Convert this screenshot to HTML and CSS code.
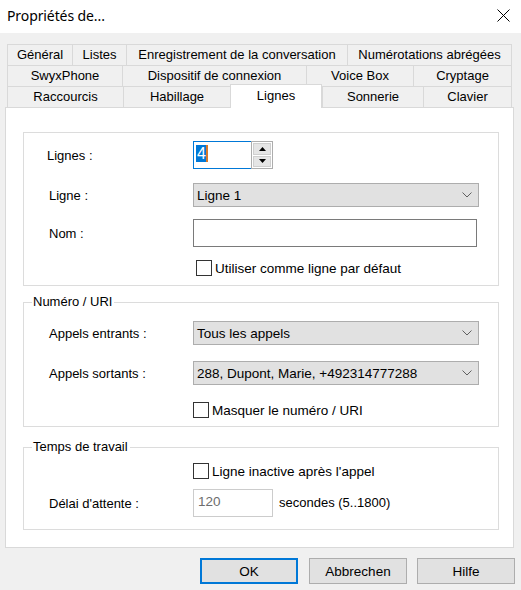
FILE: index.html
```html
<!DOCTYPE html>
<html lang="fr">
<head>
<meta charset="utf-8">
<title>Propriétés de...</title>
<link rel="stylesheet" href="styles.css">
</head>
<body>
<div class="dialog">
  <div class="titlebar">
    <span class="title">Propriétés de...</span>
    <svg class="close" width="13" height="13" viewBox="0 0 13 13"><path d="M0.5 0.5L12.5 12.5M12.5 0.5L0.5 12.5" stroke="#000" stroke-width="1" fill="none"/></svg>
  </div>

  <div class="tabs">
    <div class="tab-row">
      <div class="tab w65">Général</div>
      <div class="tab w54">Listes</div>
      <div class="tab w221">Enregistrement de la conversation</div>
      <div class="tab w165 last">Numérotations abrégées</div>
    </div>
    <div class="tab-row">
      <div class="tab w115">SwyxPhone</div>
      <div class="tab w184">Dispositif de connexion</div>
      <div class="tab w107">Voice Box</div>
      <div class="tab w99 last">Cryptage</div>
    </div>
    <div class="tab-row">
      <div class="tab w116">Raccourcis</div>
      <div class="tab w107">Habillage</div>
      <div class="tab w92 active">Lignes</div>
      <div class="tab w101">Sonnerie</div>
      <div class="tab w89 last">Clavier</div>
    </div>
  </div>

  <div class="panel">
    <div class="group g1">
      <div class="row">
        <span class="label lbl-lines">Lignes :</span>
        <div class="spin">
          <div class="spin-field"><span class="sel">4</span><span class="caret"></span></div>
          <div class="spin-btns">
            <div class="spin-btn"><svg width="7" height="4" viewBox="0 0 7 4"><path d="M3.5 0L7 4H0Z" fill="#000"/></svg></div>
            <div class="spin-btn"><svg width="7" height="4" viewBox="0 0 7 4"><path d="M0 0H7L3.5 4Z" fill="#000"/></svg></div>
          </div>
        </div>
      </div>
      <div class="row r-combo1">
        <span class="label">Ligne :</span>
        <div class="combo wide"><span>Ligne 1</span><svg width="10" height="6" viewBox="0 0 10 6"><path d="M0.5 0.5L5 5L9.5 0.5" stroke="#606060" fill="none"/></svg></div>
      </div>
      <div class="row r-name">
        <span class="label">Nom :</span>
        <div class="textbox name"></div>
      </div>
      <div class="row r-check1">
        <span class="label"></span>
        <label class="check shift"><span class="box"></span>Utiliser comme ligne par défaut</label>
      </div>
    </div>

    <div class="group g2">
      <div class="group-title">Numéro / URI</div>
      <div class="row r-in">
        <span class="label">Appels entrants :</span>
        <div class="combo wide2"><span>Tous les appels</span><svg width="10" height="6" viewBox="0 0 10 6"><path d="M0.5 0.5L5 5L9.5 0.5" stroke="#606060" fill="none"/></svg></div>
      </div>
      <div class="row r-out">
        <span class="label">Appels sortants :</span>
        <div class="combo wide2"><span>288, Dupont, Marie, +492314777288</span><svg width="10" height="6" viewBox="0 0 10 6"><path d="M0.5 0.5L5 5L9.5 0.5" stroke="#606060" fill="none"/></svg></div>
      </div>
      <div class="row r-check2">
        <span class="label"></span>
        <label class="check"><span class="box"></span>Masquer le numéro / URI</label>
      </div>
    </div>

    <div class="group g3">
      <div class="group-title">Temps de travail</div>
      <div class="row r-check3">
        <span class="label"></span>
        <label class="check"><span class="box"></span>Ligne inactive après l'appel</label>
      </div>
      <div class="row r-delay">
        <span class="label">Délai d'attente :</span>
        <div class="textbox delay">120</div>
        <span class="unit">secondes (5..1800)</span>
      </div>
    </div>
  </div>

  <div class="buttons">
    <button class="btn default">OK</button>
    <button class="btn">Abbrechen</button>
    <button class="btn">Hilfe</button>
  </div>
</div>
</body>
</html>
```

FILE: styles.css
```css
* { box-sizing: border-box; }

html, body {
  margin: 0;
  padding: 0;
}

body {
  width: 521px;
  height: 590px;
  background: #f0f0f0;
  font-family: "Liberation Sans", Arial, sans-serif;
  font-size: 13px;
  color: #000;
  overflow: hidden;
}

.dialog {
  width: 521px;
  height: 590px;
  display: flex;
  flex-direction: column;
}

/* title bar */
.titlebar {
  height: 33px;
  background: #fff;
  display: flex;
  align-items: center;
  justify-content: space-between;
  padding: 0 11px 0 7px;
}

.title {
  font-family: "Noto Sans", "Open Sans", sans-serif;
  font-size: 14px;
  margin-top: -2px;
  letter-spacing: -0.1px;
}

.close { margin-top: -2px; }

/* tab strip */
.tabs {
  margin: 11px 0 0 7px;
  width: 505px;
  display: flex;
  flex-direction: column;
}

.tab-row {
  display: flex;
  height: 21px;
  align-items: flex-start;
}

.tab {
  height: 21px;
  border-top: 1px solid #d9d9d9;
  border-left: 1px solid #d9d9d9;
  background: #f0f0f0;
  display: flex;
  align-items: center;
  justify-content: center;
  white-space: nowrap;
  padding-bottom: 1px;
}

.tab.last { border-right: 1px solid #d9d9d9; }

.tab.active {
  position: relative;
  z-index: 1;
  margin-top: -2px;
  height: 24px;
  background: #fff;
  border-right: 1px solid #d9d9d9;
  padding-bottom: 3px;
}

.w54 { width: 54px; }
.w65 { width: 65px; }
.w89 { width: 89px; }
.w92 { width: 92px; }
.w99 { width: 99px; }
.w101 { width: 101px; }
.w107 { width: 107px; }
.w115 { width: 115px; }
.w116 { width: 116px; }
.w165 { width: 165px; }
.w184 { width: 184px; }
.w221 { width: 221px; }

/* tab page */
.panel {
  margin-left: 5px;
  width: 509px;
  height: 441px;
  background: #fff;
  border: 1px solid #d9d9d9;
  padding: 24px 14px 0 17px;
}

.group {
  border: 1px solid #dcdcdc;
  display: flex;
  flex-direction: column;
  padding-left: 25px;
}

.g1 { height: 154px; padding-top: 8px; }
.g2 { height: 125px; margin-top: 16px; }
.g3 { height: 83px; margin-top: 20px; }

.group-title {
  align-self: flex-start;
  margin: -9px 0 0 -17px;
  padding: 0 2px 0 1px;
  background: #fff;
  height: 16px;
  line-height: 16px;
}

.row {
  display: flex;
  align-items: center;
}

.label {
  width: 144px;
  flex: none;
}

.lbl-lines { margin-left: -2px; width: 146px; }

.r-combo1 { margin-top: 14px; }
.r-name { margin-top: 12px; }
.r-check1 { margin-top: 13px; }

.r-in { margin-top: 11px; }
.r-out { margin-top: 16px; }
.r-check2 { margin-top: 17px; }

.r-check3 { margin-top: 8px; }
.r-delay { margin-top: 10px; }

/* spin box */
.spin {
  display: flex;
  height: 28px;
}

.spin-field {
  width: 58px;
  height: 28px;
  border: 1px solid #0078d7;
  border-right: none;
  display: flex;
  align-items: flex-start;
  padding: 3px 0 0 2px;
}

.sel {
  background: #0078d7;
  color: #fff;
  font-size: 16px;
  line-height: 17px;
  padding: 0 0 0 1px;
  height: 17px;
}

.caret {
  width: 2px;
  height: 17px;
  background: #d6782a;
}

.spin-btns {
  width: 22px;
  height: 28px;
  border: 1px solid #adadad;
  display: flex;
  flex-direction: column;
  padding: 1px;
  gap: 1px;
}

.spin-btn {
  flex: 1;
  background: #e5e5e5;
  border: 1px solid #cfcfcf;
  display: flex;
  align-items: center;
  justify-content: center;
}

/* combo boxes */
.combo {
  height: 24px;
  background: #e1e1e1;
  border: 1px solid #adadad;
  display: flex;
  align-items: center;
  justify-content: space-between;
  padding: 0 6px 0 3px;
}

.combo span { font-size: 13.5px; }

.combo.wide { width: 286px; }
.combo.wide2 { width: 286px; }

/* text boxes */
.textbox {
  height: 28px;
  background: #fff;
  border: 1px solid #7a7a7a;
}

.textbox.name { width: 284px; }

.textbox.delay {
  width: 80px;
  border-color: #cccccc;
  color: #6d6d6d;
  padding: 4px 0 0 4px;
  font-size: 13.5px;
}

.unit {
  margin-left: 6px;
  margin-top: -2px;
}

/* check boxes */
.check {
  display: flex;
  align-items: center;
  gap: 3px;
  font-size: 13.5px;
}

.check.shift { margin-left: 3px; }

.box {
  width: 16px;
  height: 16px;
  border: 1px solid #333;
  background: #fff;
}

/* dialog buttons */
.buttons {
  display: flex;
  justify-content: flex-end;
  gap: 10px;
  padding-right: 6px;
  margin-top: 10px;
}

.btn {
  width: 98px;
  height: 26px;
  background: #e1e1e1;
  border: 1px solid #adadad;
  font-family: "Liberation Sans", Arial, sans-serif;
  font-size: 13.5px;
  color: #000;
  padding: 0;
  margin: 0;
}

.btn.default {
  border: 2px solid #0078d7;
  margin-right: 1px;
}
```
